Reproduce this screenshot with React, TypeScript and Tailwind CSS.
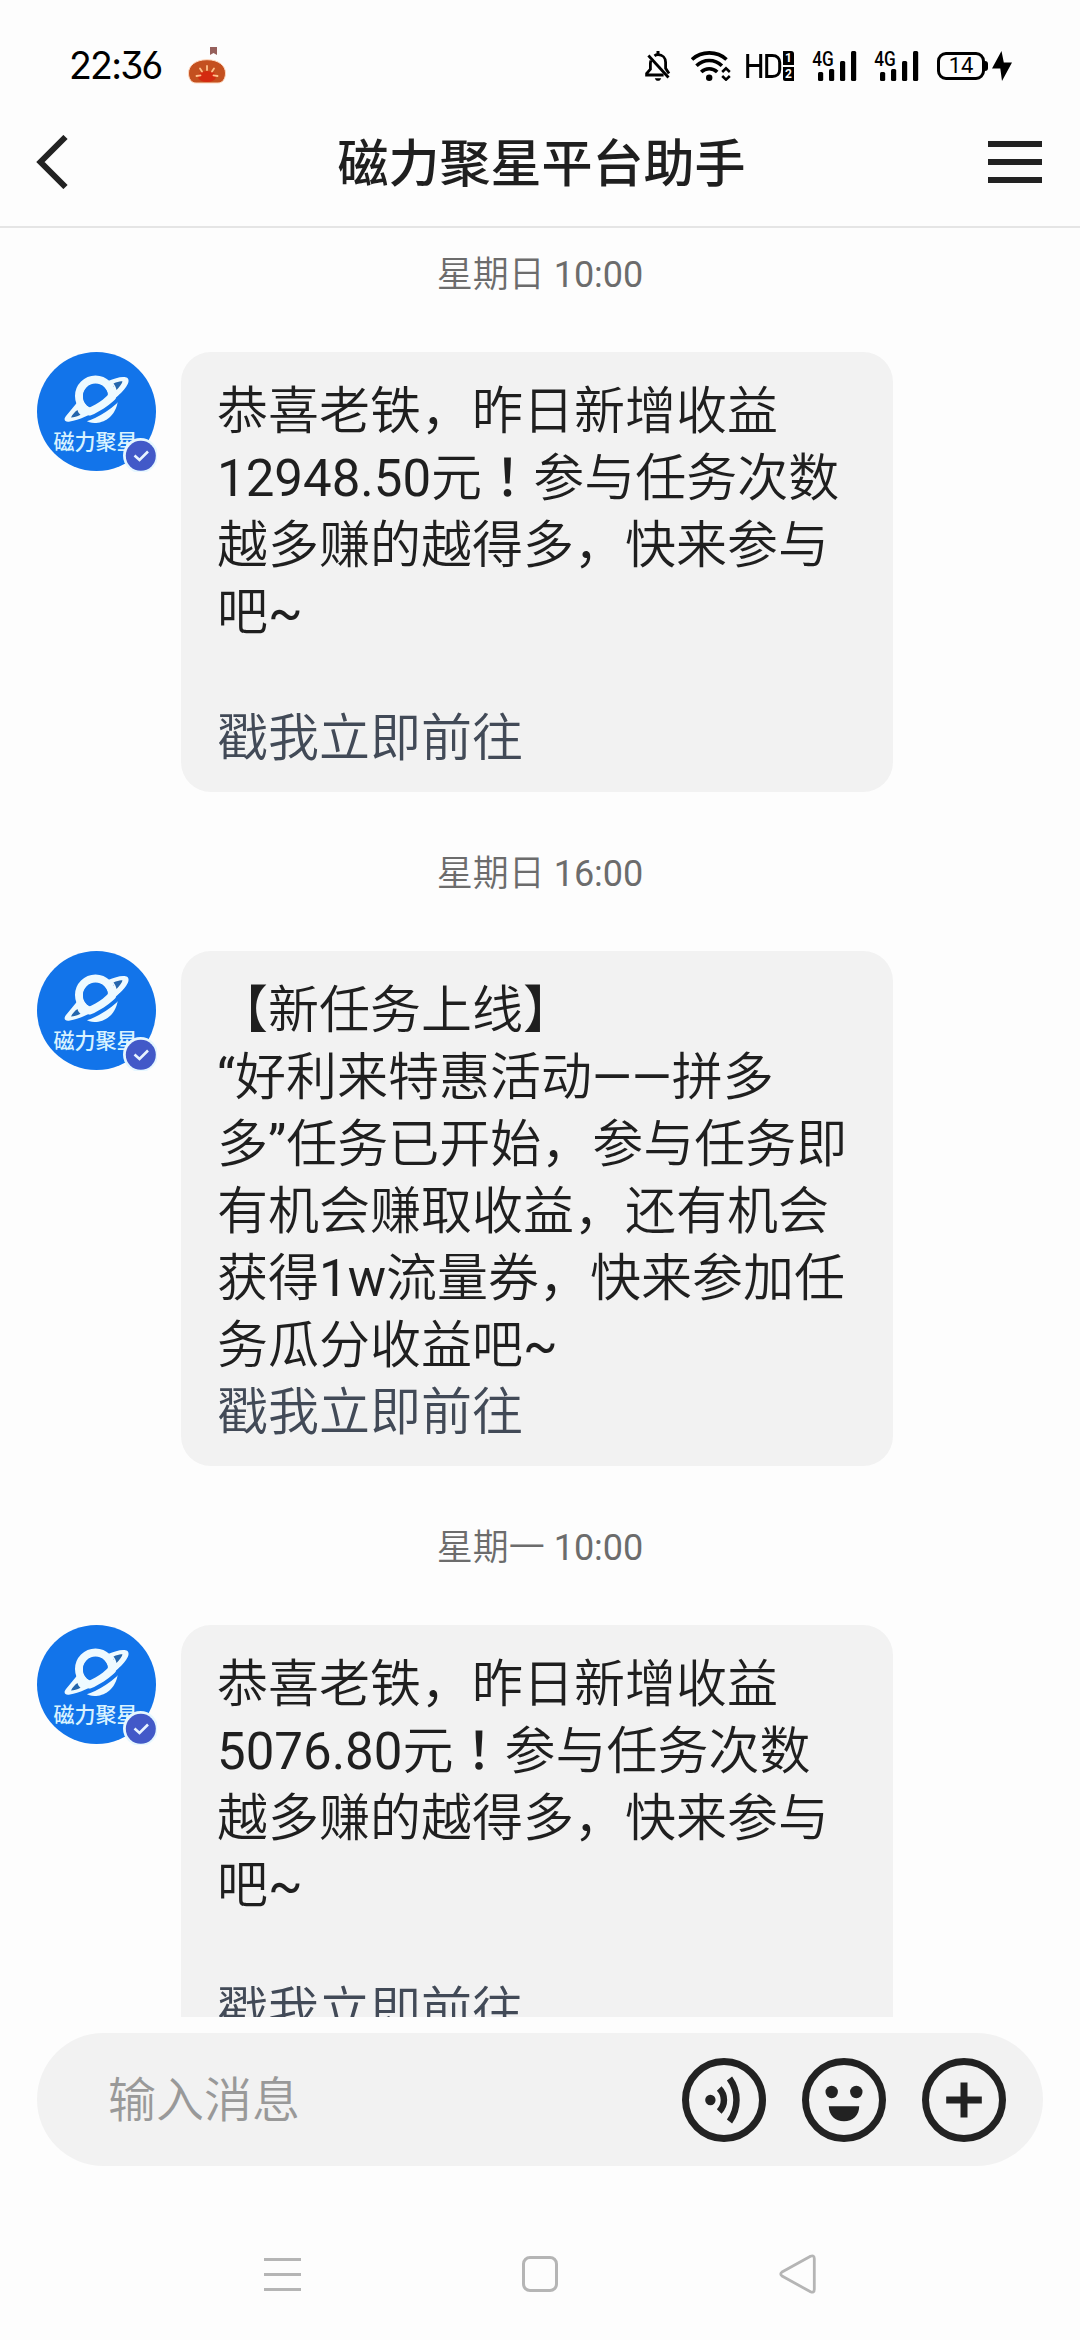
import React from "react";

const FONT = "font-[Roboto,'Noto_Sans_CJK_SC',sans-serif]";

function BellOff() {
  return (
    <svg className="h-[30px] w-[26px]" viewBox="0 0 26 30" fill="none" stroke="#000" strokeWidth="2.8">
      <path d="M9.5 4.800C10.500 4 12 3.700 13 3.700c4.600 0 7.600 3.300 7.600 7.600v6l3.400 5.200" />
      <path d="M6 9.500c-.4 1-.6 2-.6 3v5.800L1.600 22.500V24h17" />
      <path d="M3.400 4.500 23.500 26.500" />
      <path d="M13 0v4" strokeWidth="3" />
      <path d="M9.800 27.200h6.400c-.5 1.700-1.700 2.600-3.200 2.600s-2.700-.9-3.200-2.600z" fill="#000" stroke="none" />
    </svg>
  );
}

function Wifi() {
  return (
    <svg className="h-[30px] w-[40px]" viewBox="0 0 40 30" fill="none" stroke="#000" strokeWidth="3.600">
      <path d="M1 8.500C10.500-.3 26-.3 35.500 8.500" />
      <path d="M5.500 14.800c7.200-7 18.200-7 25.400 0" />
      <path d="M10.200 21c4.600-4.300 11.400-4.300 16 0" />
      <circle cx="18.200" cy="26.800" r="3.200" fill="#000" stroke="none" />
      <path d="m31.200 21 3.800-3.600 3.800 3.600M31.200 25l3.800 3.600 3.800-3.600" strokeWidth="2.600" />
    </svg>
  );
}

function HdBadge() {
  return (
    <div className="flex h-[30px] items-center">
      <svg className="h-[24px] w-[36px]" viewBox="0 0 36 24" fill="none" stroke="#000" strokeWidth="3">
        <path d="M1.700 0v24M14.700 0v24M1.700 11.500h13M20.700 1.500h5.500c5 0 7.500 3 7.500 7v7c0 4-2.500 7-7.500 7h-5.500z" />
      </svg>
      <div className="ml-px flex w-[11px] flex-col gap-[2px] text-center font-[Roboto] text-[12px] leading-[14px] font-bold text-white">
        <span className="h-[14px] rounded-tr-[3px] bg-black">1</span>
        <span className="h-[14px] rounded-bl-[2px] bg-black">2</span>
      </div>
    </div>
  );
}

function Signal() {
  return (
    <svg className="h-[34px] w-[45px]" viewBox="0 -2 45 34">
      <text x="0.200" y="15" textLength="21.500" lengthAdjust="spacingAndGlyphs" className="font-[Roboto] text-[19.500px] font-medium">4G</text>
      <rect x="6" y="21" width="5.200" height="9" rx="1.500" />
      <rect x="17" y="18" width="5.200" height="12" rx="1.500" />
      <rect x="28" y="10" width="5.200" height="20" rx="1.500" />
      <rect x="39" y="0" width="5.200" height="30" rx="1.500" />
    </svg>
  );
}

function Battery() {
  return (
    <div className="flex items-center">
      <div className="flex h-[28px] w-[48px] items-center justify-center rounded-[9px] border-[3px] border-black font-[Roboto] text-[22px] leading-none text-black">14</div>
      <div className="h-[10px] w-[3px] rounded-r-[3px] bg-black" />
      <svg className="ml-[4px] h-[30px] w-[20px]" viewBox="0 0 20 30">
        <path d="M9.500 0 0 17.500h8.300L10 30l10-18.500h-8.200L9.500 0z" />
      </svg>
    </div>
  );
}

function Cushion() {
  return (
    <svg className="h-[38px] w-[40px]" viewBox="0 0 40 38">
      <path d="M23 0h7v8l-3.500-2L23 8z" fill="#96605c" />
      <path d="M20 12.700C8 12.700 1.500 19 1.500 26c0 6 3 10 7.500 10h22c4.500 0 7.500-4 7.500-10 0-7-6.500-13.300-18.500-13.300z" fill="#c4501f" stroke="#ffd9bf" strokeWidth="1" />
      <ellipse cx="20" cy="29.500" rx="9" ry="5.500" fill="#d42a10" />
      <g stroke="#ffc08a" strokeWidth="1.800" strokeLinecap="round">
        <path d="M20 19v4M13 21.500l2 3M27 21.500l-2 3M9.500 29l4-.600M30.500 29l-4-.600" />
      </g>
    </svg>
  );
}

function Avatar() {
  return (
    <div className="relative flex h-[119px] w-[119px] shrink-0 flex-col items-center rounded-full bg-[#1274ea] pt-[23px]">
      <svg className="h-[50px] w-[66px]" viewBox="0 0 66 50" fill="none">
        <circle cx="31.500" cy="21" r="16.500" stroke="#eefaff" strokeWidth="8" />
        <circle cx="32.500" cy="27.500" r="21" fill="none" />
        <path d="M22 45.500C28 51 51 49 54 25L40 33z" fill="#eefaff" />
        <path d="M44 6C52 2.500 60 .5 63.500 3c2 2 1 5.500-1.500 9C52 26 24 43.500 6 46.500c-5 1-7-1.500-4-5.500l14-17 4 9.500C32 29 43 21 50 11.500z" fill="#eefaff" />
        <circle cx="31.500" cy="21.500" r="12.500" fill="#1274ea" />
        <path d="M20 34.500C30 31.500 41 24.500 48 15.500l3 7C45 29 35 35.500 24 39z" fill="#eefaff" />
        <path d="M7 42.500c1.500-3 3.500-5.500 6.500-7.500.5 2 1.500 3.600 3 4.800C13 41.500 10 42.500 7 42.500zM49.500 8.500c4-1.800 7.500-2.800 9-2-.8 2.500-3 5.500-6 8.500-.5-2.500-1.500-4.500-3-6.500z" fill="#2366ad" />
        <path d="M20 45.200C34 41 49 31 58 20" stroke="#1274ea" strokeWidth="4" />
      </svg>
      <span className="mt-px -ml-[2px] text-[21px] leading-[32px] font-medium text-[#d9f3ff]">磁力聚星</span>
      <svg className="absolute -right-px -bottom-px h-[34px] w-[34px]" viewBox="0 0 34 34">
        <circle cx="17.500" cy="17.500" r="17.500" fill="#e6f7ff" />
        <circle cx="17.800" cy="17.800" r="15" fill="#4259c8" />
        <path d="m11.500 17.500 5 4.500 8.500-8.500" fill="none" stroke="#e8f4ff" strokeWidth="2.600" />
      </svg>
    </div>
  );
}

/* Latin runs are set one weight heavier than the Chinese text; the exclamation mark uses the centred form. */
function Mixed({ text }: { text: string }) {
  return (
    <>
      {text.split(/([ -~“”—]+|！)/).map((part, i) => {
        if (part === "！") {
          return <span key={i} lang="ja" className="font-['Noto_Sans_CJK_JP'] leading-none font-medium">！</span>;
        }
        return i % 2 ? <span key={i} className="font-normal">{part}</span> : part;
      })}
    </>
  );
}

function Message({ lines, spaced }: { lines: string[]; spaced?: boolean }) {
  return (
    <div className="flex shrink-0 items-start pl-[37px]">
      <Avatar />
      <div className="ml-[25px] w-[712px] rounded-[30px] bg-[#f2f2f2] px-[36px] pt-[26px] pb-[20px] text-[51px] leading-[67px] font-[350] whitespace-pre text-[#1f1f1f]">
        {lines.map((line, i) => (
          <div key={i} className="h-[67px]"><Mixed text={line} /></div>
        ))}
        {spaced && <div className="h-[59px]" />}
        <div className="h-[67px] text-[#424a57]">戳我立即前往</div>
      </div>
    </div>
  );
}

function Stamp({ children, first }: { children: string; first?: boolean }) {
  return (
    <div className={`flex shrink-0 justify-center text-[36px] leading-[42px] font-[350] whitespace-pre text-[#6c6c6c] ${first ? "h-[124px] pt-[26px]" : "h-[159px] pt-[61px]"}`}>
      <span><Mixed text={children} /></span>
    </div>
  );
}

export default function App() {
  return (
    <div className={`flex h-[2340px] w-[1080px] flex-col overflow-hidden bg-[#fdfdfd] [text-spacing-trim:space-all] ${FONT}`}>
      <div className="flex h-[132px] shrink-0 items-center pr-[68px] pl-[69px]">
        <span className="w-[118px] font-[Inter] text-[37.500px] leading-none tracking-[-1.800px] text-black [font-feature-settings:'cv03','cv09']">22:36</span>
        <Cushion />
        <div className="ml-auto flex items-center">
          <BellOff />
          <div className="ml-[20px]"><Wifi /></div>
          <div className="ml-[15px]"><HdBadge /></div>
          <div className="ml-[18px]"><Signal /></div>
          <div className="ml-[17px]"><Signal /></div>
          <div className="ml-[18px]"><Battery /></div>
        </div>
      </div>

      <header className="flex h-[96px] shrink-0 items-start justify-between border-b-2 border-[#e5e5e5] pr-[38px] pl-[36px]">
        <svg className="mt-[3px] h-[54px] w-[59px]" viewBox="0 0 59 54" fill="none" stroke="#222" strokeWidth="6">
          <path d="M29.500 2 4.500 27l25 25" />
        </svg>
        <h1 className="mt-[3px] text-[51px] leading-[60px] font-medium text-[#1f1f1f]">磁力聚星平台助手</h1>
        <div className="mt-[9px] flex w-[54px] flex-col gap-[12px]">
          <div className="h-[6px] bg-[#222]" />
          <div className="h-[6px] bg-[#222]" />
          <div className="h-[6px] bg-[#222]" />
        </div>
      </header>

      <main className="flex h-[1789px] shrink-0 flex-col overflow-hidden">
        <Stamp first>星期日 10:00</Stamp>
        <Message spaced lines={["恭喜老铁，昨日新增收益", "12948.50元！参与任务次数", "越多赚的越得多，快来参与", "吧~"]} />
        <Stamp>星期日 16:00</Stamp>
        <Message
          lines={[
            "【新任务上线】",
            "“好利来特惠活动——拼多",
            "多”任务已开始，参与任务即",
            "有机会赚取收益，还有机会",
            "获得1w流量券，快来参加任",
            "务瓜分收益吧~",
          ]}
        />
        <Stamp>星期一 10:00</Stamp>
        <Message spaced lines={["恭喜老铁，昨日新增收益", "5076.80元！参与任务次数", "越多赚的越得多，快来参与", "吧~"]} />
      </main>

      <div className="mx-[37px] mt-[16px] flex h-[133px] shrink-0 items-center rounded-full bg-[#f2f2f2] pr-[37px] pl-[71px]">
        <span className="mt-[2px] flex-1 text-[48px] leading-[60px] font-[350] text-[#999]">输入消息</span>
        <div className="flex gap-[36px]">
          <svg className="h-[84px] w-[84px]" viewBox="0 0 84 84" fill="none" stroke="#222" strokeWidth="6.500">
            <circle cx="42" cy="42" r="38.500" strokeWidth="7" />
            <circle cx="28.400" cy="42" r="5.200" fill="#222" stroke="none" />
            <path d="M37.200 30.500c6.300 6.500 6.300 16.500 0 23M47.500 20.500c9.300 12.500 9.300 30.500 0 43" />
          </svg>
          <svg className="h-[84px] w-[84px]" viewBox="0 0 84 84" fill="#222">
            <circle cx="42" cy="42" r="38.500" strokeWidth="7" fill="none" stroke="#222" />
            <circle cx="29.700" cy="34" r="6.200" />
            <circle cx="54.300" cy="34" r="6.200" />
            <path d="M26.800 48.200h30.400c0 9-6.500 15-15.200 15s-15.200-6-15.200-15z" />
          </svg>
          <svg className="h-[84px] w-[84px]" viewBox="0 0 84 84" fill="none" stroke="#222" strokeWidth="7">
            <circle cx="42" cy="42" r="38.500" />
            <path d="M24.200 42h35.600M42 24.400v35.200" />
          </svg>
        </div>
      </div>

      <nav className="mt-[86px] flex h-[44px] shrink-0 items-center justify-between pr-[264px] pl-[264px]">
        <div className="flex w-[37px] flex-col gap-[12px]">
          <div className="h-[3px] bg-[#b5b5b5]" />
          <div className="h-[3px] bg-[#b5b5b5]" />
          <div className="h-[3px] bg-[#b5b5b5]" />
        </div>
        <div className="h-[36px] w-[36px] rounded-[8px] border-[3px] border-[#b5b5b5]" />
        <svg className="h-[40px] w-[37px]" viewBox="0 0 37 40" fill="none" stroke="#b5b5b5" strokeWidth="2.800" strokeLinejoin="round">
          <path d="M3 18 31.500 2.200q3.800-1.500 3.800 2.500v30.600q0 4-3.800 2.500L3 22q-2.500-2 0-4z" />
        </svg>
      </nav>
    </div>
  );
}
